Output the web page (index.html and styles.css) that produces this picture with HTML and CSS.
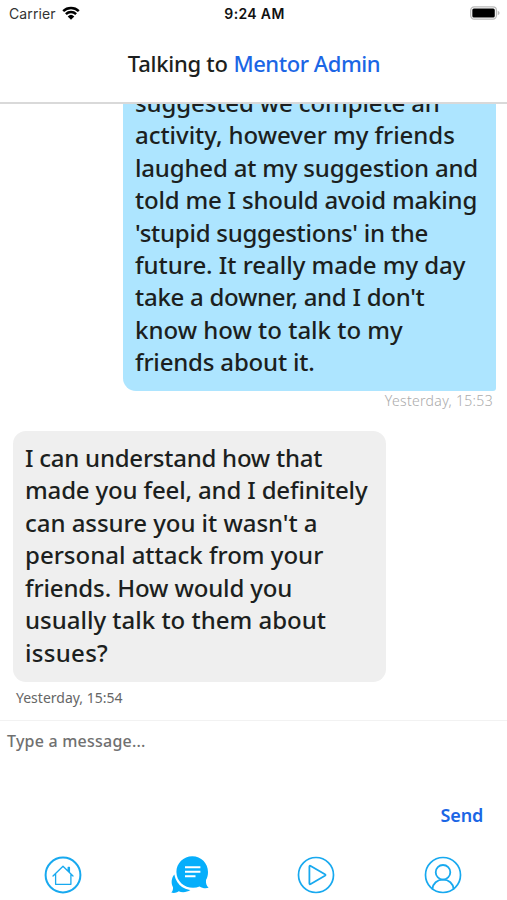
FILE: index.html
```
<!DOCTYPE html>
<html lang="en">
<head>
<meta charset="UTF-8">
<title>Talking to Mentor Admin</title>
<link rel="stylesheet" href="styles.css">
</head>
<body>
	<div class="statusBar">
		<div class="carrier">
			<span>Carrier</span>
			<svg class="wifi" viewBox="0 0 18 14">
				<path d="M1.2 5.2A11.4 11.4 0 0 1 16.8 5.2M3.9 8.1A7.4 7.4 0 0 1 14.1 8.1" fill="none" stroke="#000" stroke-width="2.5"/>
				<path d="M9 13.8L5.7 10.4A4.8 4.8 0 0 1 12.3 10.4Z"/>
			</svg>
		</div>
		<div class="clock">9:24 AM</div>
		<div class="batteryBox">
			<svg class="battery" viewBox="0 0 31 14">
				<rect x="0.7" y="0.7" width="26.6" height="12.6" rx="3.6" fill="#fff" stroke="#bbb" stroke-width="1.3"/>
				<rect x="2.4" y="2.4" width="23.2" height="9.2" rx="1.6"/>
				<path d="M28.7 4.8Q30.6 5.6 30.6 7T28.7 9.2Z" fill="#bbb"/>
			</svg>
		</div>
	</div>

	<header class="header">
		<h1 class="title"><span class="titleText">Talking to</span> <span class="mentor">Mentor Admin</span></h1>
	</header>

	<main class="messages">
		<div class="bubble sent">
			<div class="line s1">suggested we complete an</div>
			<div class="line s2">activity, however my friends</div>
			<div class="line s3">laughed at my suggestion and</div>
			<div class="line s4">told me I should avoid making</div>
			<div class="line s5">'stupid suggestions' in the</div>
			<div class="line s6">future. It really made my day</div>
			<div class="line s7">take a downer, and I don't</div>
			<div class="line s8">know how to talk to my</div>
			<div class="line s9">friends about it.</div>
		</div>
		<div class="time timeSent">Yesterday, 15:53</div>
		<div class="bubble received">
			<div class="line r1">I can understand how that</div>
			<div class="line r2">made you feel, and I definitely</div>
			<div class="line r3">can assure you it wasn't a</div>
			<div class="line r4">personal attack from your</div>
			<div class="line r5">friends. How would you</div>
			<div class="line r6">usually talk to them about</div>
			<div class="line r7">issues?</div>
		</div>
		<div class="time timeReceived">Yesterday, 15:54</div>
	</main>

	<section class="composer">
		<div class="placeholder">Type a message...</div>
		<div class="send">Send</div>
	</section>

	<nav class="tabs">
		<div class="tab">
			<svg class="icon" viewBox="0 0 38 38">
				<circle cx="19" cy="19" r="17.4" stroke-width="2"/>
				<path d="M9 20L19 10.2L29 20M11.6 18V28.3H26.9V18M24.2 15V11.4H25.4V16.2" stroke-width="1.3"/>
			</svg>
		</div>
		<div class="tab">
			<svg class="icon" viewBox="0 0 38 38">
				<path class="fill" d="M3.4 18.6L10 24L19.4 34C16 36.4 11 36.7 7.7 35.3C5.4 37 2.8 37.2 0.3 36.6C1.6 35.2 2.2 33.3 2 31.2C-0.2 27.2 0.4 22 3.4 18.6Z"/>
				<circle class="gap" cx="21.3" cy="16.2" r="18"/>
				<path class="fill" d="M21.3 0.3C30.2 0.3 37 7.3 37 15.9C37 19 36.4 21.6 35 24C34.6 27.4 35.7 30 37.6 31.8C34.2 32.6 31 32 28.6 30.4C18 34.8 5.4 27.6 5.4 15.9C5.4 7.3 12.5 0.3 21.3 0.3Z"/>
				<path class="lines" d="M14 11.2H29.4M14 15.7H29.4M14 20.3H24.5"/>
			</svg>
		</div>
		<div class="tab">
			<svg class="icon" viewBox="0 0 38 38">
				<circle cx="19" cy="19" r="17.5" stroke-width="1.7"/>
				<path d="M12.4 10.7V27.3Q12.4 28.7 13.7 28L27.9 19.8Q29.2 19 27.9 18.2L13.7 10Q12.4 9.3 12.4 10.7Z" stroke-width="1.8"/>
			</svg>
		</div>
		<div class="tab">
			<svg class="icon" viewBox="0 0 38 38">
				<circle cx="19" cy="19" r="17.5" stroke-width="1.7"/>
				<circle cx="19" cy="16.3" r="7.3" stroke-width="1.8"/>
				<path d="M8.4 32.8C9 27.5 13 23.6 19 23.6S29 27.5 29.6 32.8" stroke-width="1.8"/>
			</svg>
		</div>
	</nav>
</body>
</html>
```

FILE: styles.css
```
*{box-sizing:border-box;}
body{margin:0; width:507px; height:900px; overflow:hidden; display:flex; flex-direction:column;
	background-color:#fff; color:#1c1f20; font-family:"Noto Sans", "Open Sans", sans-serif;}

/* status bar */
.statusBar{height:27px; display:grid; grid-template-columns:1fr auto 1fr; align-items:center;
	padding:0 7px 0 9px; font-family:Inter, sans-serif; font-size:14px; color:#111;}
.carrier{display:flex; align-items:center; gap:6px; color:#333; letter-spacing:0.1px;}
.wifi{width:18px; height:14px; margin-bottom:1px;}
.clock{font-weight:600; letter-spacing:0.35px;}
.batteryBox{display:flex; justify-content:flex-end;}
.battery{width:30px; height:14px; margin-bottom:1px;}

/* header */
.header{height:77px; flex:none; border-bottom:2px solid #d9d9d9; display:flex; align-items:center;
	justify-content:center; padding:0 0 4px 1px;}
.title{margin:0; font-size:22px; font-weight:500; line-height:30px; white-space:nowrap;}
.titleText{letter-spacing:-0.25px;}
.mentor{color:#1b66e5; letter-spacing:-0.45px;}

/* messages */
.messages{height:616px; flex:none; overflow:hidden; display:flex; flex-direction:column; justify-content:flex-end;
	padding:0 11px 12px 13px;}
.bubble{width:373px; padding:11px 12px 13px; font-size:24px; font-weight:500; line-height:32.45px;
	white-space:nowrap; flex:none;}
.sent{align-self:flex-end; background-color:#ade5ff; border-radius:13px 13px 3px 13px;
	padding-bottom:12px;}
.received{background-color:#efefef; border-radius:13px; margin-top:20px;}
.line{width:max-content;}
.time{font-size:14px; line-height:20px; flex:none;}
.timeSent{align-self:flex-end; color:#aaa; margin-right:3px; font-weight:300; letter-spacing:0.33px;}
.timeReceived{color:#666; margin:6px 0 0 3px;}

/* line spacing, sent bubble */
.s1{letter-spacing:-0.12px;}
.s2{letter-spacing:-0.04px;}
.s3{letter-spacing:-0.18px;}
.s4{letter-spacing:-0.2px;}
.s5{letter-spacing:-0.26px;}
.s6{letter-spacing:-0.03px;}
.s7{letter-spacing:-0.27px;}
.s9{letter-spacing:-0.18px;}

/* line spacing, received bubble */
.r1{letter-spacing:-0.24px;}
.r2{letter-spacing:-0.16px;}
.r3{letter-spacing:-0.04px;}
.r5{letter-spacing:-0.13px;}
.r7{letter-spacing:0.3px;}

/* composer */
.composer{height:128px; flex:none; border-top:1px solid #f2f2f2; display:flex; flex-direction:column;
	justify-content:space-between; padding:9px 24px 20px 7px;}
.placeholder{font-size:16px; line-height:22px; font-weight:500; color:#707070; letter-spacing:0.22px;}
.send{align-self:flex-end; font-size:18px; line-height:26px; font-weight:600; color:#1b66e5; letter-spacing:-0.2px;}

/* tabs */
.tabs{flex:1; display:grid; grid-template-columns:repeat(4, 1fr); justify-items:center; padding:7.5px 1px 0 0;}
.icon{width:38px; height:38px; fill:none; stroke:#18a9ef; stroke-linejoin:round; stroke-linecap:round; overflow:visible;}
.fill{fill:#06aefb; stroke:none;}
.gap{fill:#fff; stroke:none;}
.lines{stroke:#fff; stroke-width:2; stroke-linecap:butt;}
```
